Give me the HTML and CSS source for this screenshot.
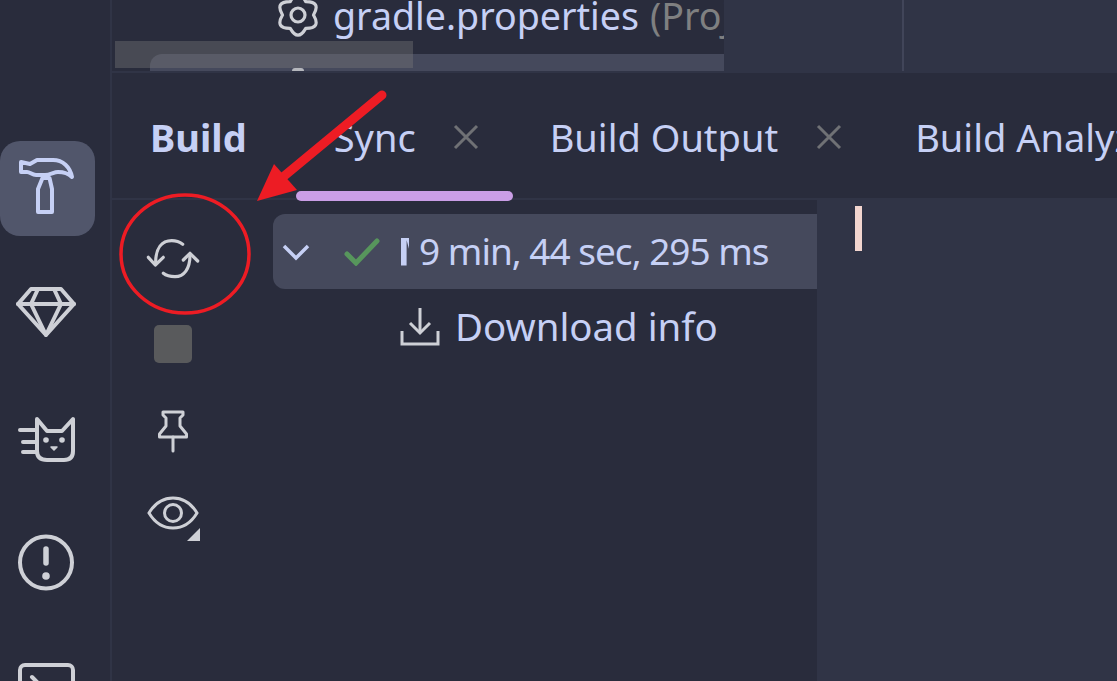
FILE: index.html
```html
<!DOCTYPE html>
<html lang="en">
<head>
  <meta charset="UTF-8">
  <title>Build tool window</title>
  <link rel="stylesheet" href="styles.css">
</head>
<body>
  <div class="app">
    <!-- Left tool strip -->
    <div class="rail">
      <div class="rail-btn active">
        <svg width="95" height="95" viewBox="0 0 95 95" fill="none" stroke="#c6d0f5" stroke-width="4" stroke-linejoin="round"><path d="M21 21L30 23L37 19H53C63 19 70 26 72 36C68 32 62 31 58 31C54 31 50 34 45 34H36C32 34 30 31 27 31H21Z"/><path d="M42.5 37H49.5L52 48V71H38V48Z"/></svg>
      </div>
      <div class="rail-btn">
        <svg width="95" height="95" viewBox="0 0 95 95" fill="none" stroke="#ced0d6" stroke-width="4" stroke-linejoin="round" stroke-linecap="round"><path d="M31 23H61L74 38L46 69L18 38Z"/><path d="M18 38H74"/><path d="M38 23L31 38L46 69L61 38L54 23"/></svg>
      </div>
      <div class="rail-btn">
        <svg width="95" height="95" viewBox="0 0 95 95" fill="none" stroke="#ced0d6" stroke-width="4" stroke-linejoin="round" stroke-linecap="round"><path d="M37 28L47 40H62L73 28V60Q73 69 64 69H47Q37 69 37 60Z"/><path d="M20 39H37M23 51H37M23 61H37"/><circle cx="46" cy="49" r="2.8" fill="#ced0d6" stroke="none"/><circle cx="62" cy="49" r="2.8" fill="#ced0d6" stroke="none"/><path d="M51 56H57L54 59Z" fill="#ced0d6" stroke-width="1.5"/></svg>
      </div>
      <div class="rail-btn">
        <svg width="95" height="95" viewBox="0 0 95 95" fill="none" stroke="#ced0d6" stroke-width="4" stroke-linecap="round"><circle cx="46" cy="46.5" r="26"/><path d="M46 33V47" stroke-width="5.5"/><circle cx="46" cy="60" r="3.8" fill="#ced0d6" stroke="none"/></svg>
      </div>
      <div class="rail-btn">
        <svg width="95" height="95" viewBox="0 0 95 95" fill="none" stroke="#ced0d6" stroke-width="4" stroke-linecap="round" stroke-linejoin="round"><rect x="20" y="24" width="53" height="50" rx="5"/><path d="M32 36L42 46L32 56"/></svg>
      </div>
    </div>

    <div class="main">
      <!-- Project tree remainder and editor -->
      <div class="top">
        <div class="project">
          <div class="project-row">
            <svg class="gear" width="44" height="40" viewBox="0 0 44 40" fill="none" stroke="#ced0d6" stroke-width="3.2" stroke-linejoin="round"><circle cx="22" cy="16" r="7"/><path d="M37.5 16Q45.4 29.5 29.75 29.4Q22 43 14.25 29.4Q-1.4 29.5 6.5 16Q-1.4 2.5 14.25 2.6Q22 -11 29.75 2.6Q45.4 2.5 37.5 16Z"/></svg>
            <span class="file-name">gradle.properties</span>
            <span class="file-hint">(Project Properties)</span>
          </div>
          <div class="project-selected"></div>
        </div>
        <div class="editor">
          <div class="editor-line"></div>
        </div>
      </div>

      <!-- Build tool window -->
      <div class="tabs">
        <div class="tab tab-title">Build</div>
        <div class="tab tab-sync">
          <span>Sync</span>
          <svg class="close" width="26" height="26" viewBox="0 0 26 26" stroke="#6f7175" stroke-width="3"><path d="M2 2L24 24M24 2L2 24"/></svg>
          <div class="tab-mark"></div>
        </div>
        <div class="tab">
          <span>Build Output</span>
          <svg class="close" width="26" height="26" viewBox="0 0 26 26" stroke="#6f7175" stroke-width="3"><path d="M2 2L24 24M24 2L2 24"/></svg>
        </div>
        <div class="tab tab-cut">Build Analyzer</div>
      </div>

      <div class="build">
        <div class="tools">
          <svg width="60" height="60" viewBox="0 0 60 60" fill="none" stroke="#ced0d6" stroke-width="3.2" stroke-linecap="round" stroke-linejoin="round"><path d="M39.7 15.3C36 12.5 33 11.7 28.7 11.7C19 11.7 12.6 19 12.6 34"/><path d="M5.3 28.3L12.3 36L20.3 28.3"/><path d="M20.3 44.3C23 46.5 27 47.7 32 47.7C41 47.7 47 40 47 26"/><path d="M40.3 31L47 24.3L54.7 32"/></svg>
          <div class="stop"></div>
          <svg class="pin" width="60" height="60" viewBox="0 0 60 60" fill="none" stroke="#ced0d6" stroke-width="3" stroke-linejoin="round" stroke-linecap="round"><path d="M20 10H40V13L37 16V24L43.5 32V35H16.5V32L23 24V16L20 13Z"/><path d="M30 35V49"/></svg>
          <div class="eye-wrap">
            <svg width="60" height="60" viewBox="0 0 60 60" fill="none" stroke="#ced0d6" stroke-width="3"><path d="M6 29C12 19 20 14 30 14C40 14 48 19 54 29C48 39 40 44 30 44C20 44 12 39 6 29Z"/><circle cx="30" cy="29" r="8.5"/></svg>
            <div class="eye-corner"></div>
          </div>
        </div>

        <div class="tree">
          <div class="tree-row selected">
            <svg width="28" height="18" viewBox="0 0 28 18" fill="none" stroke="#c6d0f5" stroke-width="3.5"><path d="M2 3L14 15L26 3"/></svg>
            <svg class="check" width="36" height="28" viewBox="0 0 36 28" fill="none" stroke="#57965c" stroke-width="5" stroke-linecap="round"><path d="M3 16L12 25L33 3"/></svg>
            <div class="cut-glyph"></div>
            <span class="duration">9 min, 44 sec, 295 ms</span>
          </div>
          <div class="tree-row child">
            <svg width="40" height="40" viewBox="0 0 40 40" fill="none" stroke="#ced0d6" stroke-width="3"><path d="M20 1V25"/><path d="M10 16L20 26L30 16"/><path d="M2 24V37H38V24"/></svg>
            <span class="child-label">Download info</span>
          </div>
        </div>

        <div class="console">
          <div class="caret"></div>
        </div>
      </div>
    </div>
  </div>

  <!-- Translucent leftovers and annotations that sit over the app -->
  <div class="ghost"></div>
  <div class="ghost-dot"></div>
  <svg class="markup" width="1117" height="681" viewBox="0 0 1117 681" fill="none">
    <ellipse cx="185" cy="254" rx="64" ry="59" stroke="#ed1c24" stroke-width="3.5"/>
    <path d="M382 95L283 177" stroke="#ed1c24" stroke-width="9" stroke-linecap="round"/>
    <path d="M257 201L274 164L297 190Z" fill="#ed1c24"/>
  </svg>
</body>
</html>
```

FILE: styles.css
```css
html, body {
  margin: 0;
  height: 100%;
  overflow: hidden;
}
body {
  background: #292c3c;
  color: #c6d0f5;
  font-family: "Noto Sans", sans-serif;
  font-size: 38px;
  position: relative;
}
svg {
  display: block;
  flex: none;
}
.app {
  display: flex;
  height: 681px;
  overflow: hidden;
}

/* left strip */
.rail {
  width: 110px;
  flex: none;
  padding-top: 141px;
  border-right: 2px solid #303446;
  display: flex;
  flex-direction: column;
  gap: 30px;
  overflow: hidden;
}
.rail-btn {
  width: 95px;
  height: 95px;
  flex: none;
  border-radius: 20px;
}
.rail-btn.active {
  background: #51566b;
}

.main {
  flex: 1;
  min-width: 0;
  display: flex;
  flex-direction: column;
}

/* top part */
.top {
  height: 71px;
  display: flex;
  flex: none;
  border-bottom: 2px solid #303446;
}
.project {
  width: 612px;
  flex: none;
  overflow: hidden;
}
.project-row {
  height: 54px;
  display: flex;
  align-items: center;
  white-space: nowrap;
  padding-left: 164px;
  line-height: 38px;
}
.gear {
  margin-right: 13px;
  margin-top: -17px;
}
.file-name, .file-hint {
  margin-top: -22px;
  font-size: 37.6px;
}
.file-hint {
  color: #7f8081;
  margin-left: 11px;
}
.project-selected {
  height: 17px;
  margin-left: 38px;
  background: #45495c;
  border-radius: 12px 0 0 0;
}
.editor {
  flex: 1;
  background: #303446;
  padding-left: 178px;
}
.editor-line {
  width: 2px;
  height: 71px;
  background: #414559;
}

/* tabs */
.tabs {
  height: 122px;
  padding-top: 3px;
  flex: none;
  display: flex;
  align-items: center;
  padding-left: 38px;
  white-space: nowrap;
  line-height: 52px;
  border-bottom: 2px solid #303446;
}
.tab {
  display: flex;
  align-items: center;
  gap: 38px;
  margin-right: 73px;
  position: relative;
  flex: none;
}
.tab-title {
  font-weight: 700;
  margin-right: 87px;
}
.tab-sync {
  gap: 37px;
  margin-right: 71px;
}
.tab-mark {
  position: absolute;
  left: -38px;
  bottom: -38px;
  width: 217px;
  height: 10px;
  border-radius: 5px;
  background: #ca9ee6;
}
.tab-cut {
  margin-right: 0;
}

/* body of the tool window */
.build {
  flex: 1;
  display: flex;
  min-height: 0;
}
.tools {
  width: 161px;
  flex: none;
  padding: 29px 39px 0 0;
  display: flex;
  flex-direction: column;
  align-items: center;
  box-sizing: border-box;
}
.stop {
  width: 38px;
  height: 38px;
  border-radius: 5px;
  background: #595a5c;
  margin-top: 36px;
}
.pin {
  margin-top: 39px;
}
.eye-wrap {
  position: relative;
  margin-top: 22px;
}
.eye-corner {
  position: absolute;
  right: 3px;
  bottom: 3px;
  width: 13px;
  height: 13px;
  background: #ced0d6;
  clip-path: polygon(100% 0, 100% 100%, 0 100%);
}
.tree {
  width: 544px;
  flex: none;
  padding-top: 14px;
  overflow: hidden;
}
.tree-row {
  height: 75px;
  display: flex;
  align-items: center;
  white-space: nowrap;
}
.tree-row.selected {
  background: #45495c;
  border-radius: 12px 0 0 12px;
  padding-left: 9px;
}
.check {
  margin-left: 34px;
}
.cut-glyph {
  width: 8px;
  height: 28px;
  background: #c6d0f5;
  margin: 0 10px 0 21px;
  clip-path: polygon(0 0, 100% 0, 100% 40%, 70% 10%, 70% 100%, 0 100%);
}
.duration {
  font-size: 37px;
  letter-spacing: -1px;
  margin-top: -3px;
}
.tree-row.child {
  padding-left: 127px;
}
.child-label {
  margin-left: 15px;
  font-size: 38.4px;
  margin-top: -2px;
}
.console {
  flex: 1;
  background: #303446;
  padding: 6px 0 0 38px;
}
.caret {
  width: 7px;
  height: 45px;
  background: #f2d5cf;
}

/* things lying over the app */
.ghost {
  position: absolute;
  left: 115px;
  top: 41px;
  width: 298px;
  height: 27px;
  background: rgba(120, 120, 120, 0.4);
}
.ghost-dot {
  position: absolute;
  left: 292px;
  top: 68px;
  width: 12px;
  height: 3px;
  border-radius: 6px 6px 0 0;
  background: #b5b7bd;
}
.markup {
  position: absolute;
  left: 0;
  top: 0;
}
```
